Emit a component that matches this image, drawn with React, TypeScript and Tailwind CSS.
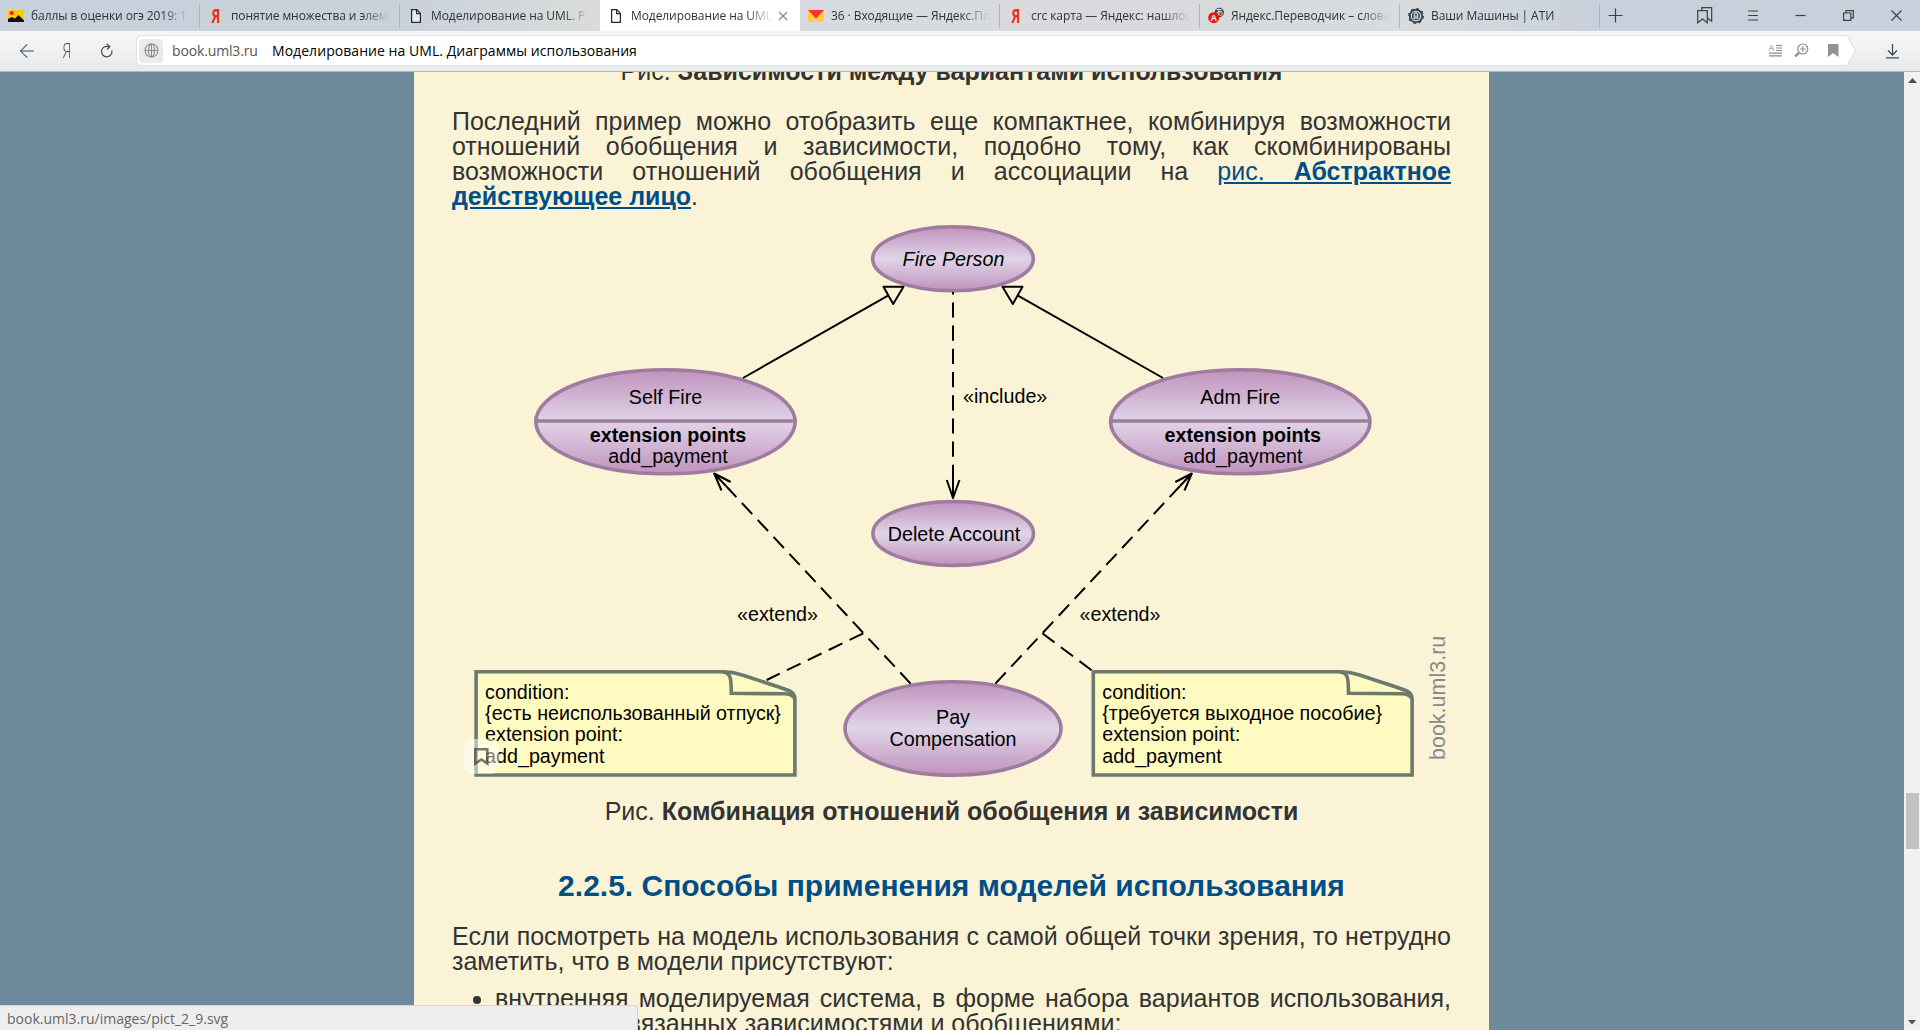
import React from 'react'
import { ArrowLeft } from 'lucide-react'

const UI_FONT = "font-['Open_Sans','Noto_Sans',sans-serif]"

const PageIcon = () => (
  <svg width="16" height="16" viewBox="0 0 16 16" fill="#fff" stroke="#2b2b2b" strokeWidth="1.3">
    <path d="M3.6 1.6h5.2l3.6 3.8v8.9H3.6z" fillOpacity=".6" />
    <path d="M8.6 1.6v4h3.8" fill="none" />
  </svg>
)

const YandexIcon = () => (
  <span className="flex h-4 w-4 items-center justify-center">
    <span className="scale-x-[0.68] text-[20px] font-bold leading-4 text-[#fb2b12] font-['Open_Sans',sans-serif]">Я</span>
  </span>
)

const PictureIcon = () => (
  <svg width="16" height="16" viewBox="0 0 16 16">
    <rect y="2" width="16" height="12" fill="#fecb00" />
    <circle cx="3.7" cy="5" r="2" fill="#f5141e" />
    <path d="M0 14v-3l4-2 3 1.500 3.500-3.500L16 12.500V14z" fill="#111" />
  </svg>
)

const MailIcon = () => (
  <svg width="16" height="16" viewBox="0 0 16 16">
    <rect y="2" width="16" height="12" fill="#ffcf40" />
    <path d="M0 2h16L8 10.500z" fill="#f8342c" />
  </svg>
)

const TranslateIcon = () => (
  <svg width="17" height="17" viewBox="0 0 17 17">
    <circle cx="11.300" cy="5.500" r="4.700" fill="#3d4146" />
    <text x="11.300" y="8.400" fontSize="8" fill="#fff" textAnchor="middle" fontFamily="Noto Sans CJK JP, sans-serif">あ</text>
    <circle cx="5.700" cy="10.700" r="5.500" fill="#f5100d" />
    <text x="5.700" y="14" fontSize="9" fontWeight="bold" fill="#fff" textAnchor="middle" fontFamily="Liberation Sans, sans-serif">A</text>
  </svg>
)

const AtiIcon = () => (
  <svg width="16" height="16" viewBox="0 0 16 16" fill="none">
    <circle cx="8" cy="8" r="7.200" fill="#36454f" />
    <circle cx="8" cy="8" r="7.300" stroke="#36454f" strokeWidth="1.400" strokeDasharray="2.900 2.830" />
    <circle cx="8" cy="8" r="4.700" stroke="#d5dade" strokeWidth="1.200" />
    <path d="M6.300 11V6.200L8 4.700l1.700 1.500V11M8 7.500V11" stroke="#e8ecee" strokeWidth="1.100" />
  </svg>
)

const tabs = [
  { icon: <PictureIcon />, title: 'баллы в оценки огэ 2019: 1', from: 'bg-[#c8d0db]' },
  { icon: <YandexIcon />, title: 'понятие множества и элементы', from: 'bg-[#c9d1da]' },
  { icon: <PageIcon />, title: 'Моделирование на UML. Р', from: 'bg-linear-to-r from-[#c9d1da] to-[#dadcda]' },
  { icon: <PageIcon />, title: 'Моделирование на UML', active: true, from: 'bg-white' },
  { icon: <MailIcon />, title: '36 · Входящие — Яндекс.Почта', from: 'bg-[#d7dade]' },
  { icon: <YandexIcon />, title: 'crc карта — Яндекс: нашлось', from: 'bg-[#d9dadd]' },
  { icon: <TranslateIcon />, title: 'Яндекс.Переводчик – словарь', from: 'bg-linear-to-r from-[#d6dadb] to-[#d8dcde]' },
  { icon: <AtiIcon />, title: 'Ваши Машины | АТИ', from: 'bg-linear-to-r from-[#d8dcde] to-[#c8d0db]' },
]

const TabBar = () => (
  <div className="flex h-[31px] shrink-0 bg-[#c8d0db] text-[12px] text-[#2f3337]">
    {tabs.map((tab, index) => (
      <div key={index} className={`flex w-[200px] shrink-0 items-center ${tab.from}`}>
        <div className="flex h-4 w-[31px] shrink-0 items-center pl-2">{tab.icon}</div>
        <div
          className={`overflow-hidden whitespace-nowrap tracking-[-0.08px] ${
            tab.active ? 'w-[141px]' : 'w-[159px]'
          } mask-[linear-gradient(to_right,#000_82%,transparent)]`}
        >
          {tab.title}
        </div>
        {tab.active ? (
          <svg className="ml-[6px]" width="10" height="10" viewBox="0 0 10 10" stroke="#888" strokeWidth="1.200">
            <path d="M1 1l8 8M9 1L1 9" />
          </svg>
        ) : (
          index !== 2 && <div className="ml-auto h-6 w-px bg-[#aeb5bd]" />
        )}
      </div>
    ))}
    <div className="flex flex-1 items-center text-[#3a4047]">
      <svg className="ml-2" width="15" height="15" viewBox="0 0 15 15" stroke="currentColor" strokeWidth="1.200">
        <path d="M7.500 0.500v14M0.500 7.500h14" />
      </svg>
      <svg className="ml-[74px]" width="16" height="17" viewBox="0 0 16 17" fill="none" stroke="currentColor" strokeWidth="1.200">
        <path d="M.7 3.700h9.600v12L5.500 12 .7 15.700z" />
        <path d="M4.700 3.500V.7h10v13.500l-4-3" />
      </svg>
      <svg className="ml-[34px]" width="12" height="11" viewBox="0 0 12 11" stroke="currentColor" strokeWidth="1.200">
        <path d="M1 1h10M1 5.500h10M1 10h10" />
      </svg>
      <svg className="ml-9" width="11" height="11" viewBox="0 0 11 11" stroke="currentColor" strokeWidth="1.200">
        <path d="M.5 5.500h10" />
      </svg>
      <svg className="ml-[37px]" width="11" height="11" viewBox="0 0 11 11" fill="none" stroke="currentColor" strokeWidth="1.200">
        <path d="M.6 3h7.200v7.400H.6zM3 3V.7h7.300v7.200H8" />
      </svg>
      <svg className="ml-[37px]" width="11" height="11" viewBox="0 0 11 11" stroke="currentColor" strokeWidth="1.200">
        <path d="M.5.5l10 10M10.500.5l-10 10" />
      </svg>
    </div>
  </div>
)

const AddressBar = () => (
  <div className="flex h-[41px] shrink-0 border-b border-[#b4bab9] bg-linear-to-b from-[#f5f6f7] to-[#e7eaeb] pt-1">
    <div className="flex h-[31px] w-[136px] shrink-0 items-center text-[#434b52]">
      <ArrowLeft className="ml-[16px]" size={22} strokeWidth={1.1} />
      <span className="ml-[23px] w-3 scale-x-75 text-[20px] font-light">Я</span>
      <svg className="ml-[27px]" width="14" height="16" viewBox="0 0 14 16" fill="none" stroke="currentColor" strokeWidth="1.200">
        <path d="M11.800 7.500A5.200 5.200 0 1 1 8.500 3.700M6.500.8l3.300 2.700-2.600 3" />
      </svg>
    </div>
    <div className="flex h-[31px] w-[1711px] items-center rounded-l-md border-y border-l border-[#e0e3e4] bg-white pl-[2px] text-[14px]">
      <div className="flex h-6 w-6 items-center justify-center rounded-sm bg-[#ebebeb]">
        <svg width="15" height="15" viewBox="0 0 15 15" fill="none" stroke="#8b8b8b" strokeWidth="1.100">
          <circle cx="7.500" cy="7.500" r="6.500" />
          <ellipse cx="7.500" cy="7.500" rx="3" ry="6.500" />
          <path d="M7.500 1v13M1 7.500h13" />
        </svg>
      </div>
      <span className="ml-[9px] w-[100px] tracking-[-0.15px] text-[#555]">book.uml3.ru</span>
      <span className="whitespace-nowrap tracking-[0.05px] text-black">Моделирование на UML. Диаграммы использования</span>
      <div className="ml-auto flex items-center pr-[8px]">
        <svg width="14" height="13" viewBox="0 0 14 13" stroke="#888" strokeWidth="1.200">
          <text x="-.5" y="6.800" fontSize="8.500" fill="#888" stroke="none" fontFamily="Liberation Sans, sans-serif">A</text>
          <path d="M7 1.500h6M7 4h6M7 6.500h6M0 9.200h13M0 11.800h13" />
        </svg>
        <svg className="ml-[11px]" width="15" height="15" viewBox="0 0 15 15" fill="none" stroke="#8f8f8f" strokeWidth="1.200">
          <circle cx="8.800" cy="6" r="5" />
          <path d="M8.800 3.200v5.600M6 6h5.600" />
          <path d="M5 9.700L1.200 13.500" strokeWidth="2.400" />
        </svg>
        <svg className="ml-[19px]" width="11" height="13" viewBox="0 0 11 13">
          <path d="M0 0h10.500v13L5.200 9 0 13z" fill="#929292" />
        </svg>
      </div>
    </div>
    <svg width="9" height="31" viewBox="0 0 9 31">
      <path d="M0 0L8.500 15.500 0 31z" fill="#fff" />
      <path d="M0 .5L8.300 15.500 0 30.500" fill="none" stroke="#d9dcdd" />
    </svg>
    <svg className="ml-[29px] mt-2" width="15" height="16" viewBox="0 0 15 16" fill="none" stroke="#434b52" strokeWidth="1.300">
      <path d="M7.500 1v11M3 7.500L7.500 12 12 7.500M1 14.800h13" />
    </svg>
  </div>
)

const UseCase = ({ cx, cy, rx, ry }: { cx: number; cy: number; rx: number; ry: number }) => (
  <ellipse cx={cx} cy={cy} rx={rx} ry={ry} fill="url(#usecase)" stroke="#a07ba0" strokeWidth="3.600" />
)

const ExtensibleUseCase = ({ cx, name }: { cx: number; name: string }) => (
  <g>
    <UseCase cx={cx} cy={421.800} rx={129.700} ry={52} />
    <path d={`M${cx - 129} 421h258`} stroke="#a07ba0" strokeWidth="3.600" />
    <text x={cx} y="403.500">{name}</text>
    <text x={cx + 2.500} y="441.500" fontWeight="bold">extension points</text>
    <text x={cx + 2.500} y="462.500">add_payment</text>
  </g>
)

const Note = ({ x, condition }: { x: number; condition: string }) => (
  <g transform={`translate(${x} 670)`}>
    <g fill="#fffabf" stroke="#6b796f" strokeWidth="3.600" strokeLinejoin="miter">
      <path d="M1.800 1.800H248C258 1.800 262 3 268 5L306 17.500C315 20.500 320.600 22 320.600 29V105H1.800z" />
      <path d="M248 1.800C256 2.500 257 7 257 23.300L310 23.800C316 24 319 25 320.600 29" fill="none" />
    </g>
    <g textAnchor="start">
      <text x="10.800" y="29">condition:</text>
      <text x="10.800" y="50">{condition}</text>
      <text x="10.800" y="71">extension point:</text>
      <text x="10.800" y="93">add_payment</text>
    </g>
  </g>
)

// Lines shared by both halves of the diagram, the right half is mirrored
const Links = () => (
  <g>
    <path d="M743 378L888 295.700" />
    <path d="M883.500 286.800h20l-10.300 17.200z" />
    <path d="M726 486L714.200 473.500M730.700 482l-16.500-8.500 7.300 17" />
    <path d="M726 486L911 684" strokeDasharray="15.200 8" />
  </g>
)

const Diagram = () => (
  <svg className="block" width="999" height="590" viewBox="452 209 999 590" fontFamily="Liberation Sans, Arial, sans-serif" fontSize="19.700" textAnchor="middle">
    <defs>
      <linearGradient id="usecase" x1="0" y1="0" x2="0" y2="1">
        <stop offset="0" stopColor="#c092bd" />
        <stop offset=".5" stopColor="#e0d4e7" />
        <stop offset="1" stopColor="#c092bd" />
      </linearGradient>
    </defs>

    <UseCase cx={953} cy={258.800} rx={80.300} ry={32} />
    <text x="953.500" y="265.500" fontStyle="italic">Fire Person</text>
    <ExtensibleUseCase cx={665.500} name="Self Fire" />
    <ExtensibleUseCase cx={1240.300} name="Adm Fire" />
    <UseCase cx={953.200} cy={533.500} rx={80.300} ry={32} />
    <text x="954" y="540.500">Delete Account</text>
    <UseCase cx={953} cy={728.500} rx={108} ry={46.800} />
    <text x="953" y="724.300">Pay</text>
    <text x="953" y="745.500">Compensation</text>

    <g fill="none" stroke="#000" strokeWidth="2" strokeLinejoin="round">
      <Links />
      <g transform="translate(1906 0) scale(-1 1)">
        <Links />
      </g>
      <path d="M953 498V480M946.800 480L953 498l6.500-18" />
      <path d="M953 480V292" strokeDasharray="15.200 8" />
      <path d="M863.300 633.300L766.700 680" strokeDasharray="15.200 8" />
      <path d="M1042.300 633.300L1092 670.500" strokeDasharray="15.200 8" />
    </g>

    <g textAnchor="start">
      <text x="963" y="403.300">«include»</text>
      <text x="737" y="620.500">«extend»</text>
      <text x="1079.500" y="620.500">«extend»</text>
    </g>

    <Note x={474.300} condition="{есть неиспользованный отпуск}" />
    <Note x={1091.500} condition="{требуется выходное пособие}" />
    <text transform="translate(1444.500 760) rotate(-90)" textAnchor="start" fontSize="21.500" fill="#888">book.uml3.ru</text>
  </svg>
)

const Article = () => (
  <main className="relative w-[1075px] bg-[#faf3d5] pl-[38px] pr-[38px] text-[25px] leading-[25px] text-[#333] font-['Liberation_Sans',Arial,sans-serif]">
    <p className="-mt-[13px] text-center">
      Рис. <b>Зависимости между вариантами использования</b>
    </p>
    <p className="mt-[25px] text-justify">
      Последний пример можно отобразить еще компактнее, комбинируя возможности отношений обобщения и зависимости,
      подобно тому, как скомбинированы возможности отношений обобщения и ассоциации на{' '}
      <a href="#" className="text-[#004e87] underline">
        рис. <b>Абстрактное действующее лицо</b>
      </a>
      .
    </p>
    <Diagram />
    {/* Bookmark button shown over the hovered picture */}
    <div className="absolute left-[50px] top-[667px] flex h-[35px] w-[35px] items-center justify-center rounded-lg bg-white/50">
      <svg width="17" height="18" viewBox="0 0 17 18" fill="none" stroke="#3f3f35" strokeOpacity=".7" strokeWidth="2.600">
        <path d="M2.300 1.300h12v14.200L8.300 11.500l-6 4z" />
      </svg>
    </div>
    <p className="text-center">
      Рис. <b>Комбинация отношений обобщения и зависимости</b>
    </p>
    <h2 className="mt-[46px] text-center text-[30px] font-bold leading-[32px] text-[#004e87]">
      2.2.5. Способы применения моделей использования
    </h2>
    <p className="mt-[22px] text-justify">
      Если посмотреть на модель использования с самой общей точки зрения, то нетрудно заметить, что в модели
      присутствуют:
    </p>
    <ul className="mt-3 list-disc pl-[43px] text-justify">
      <li>
        внутренняя моделируемая система, в форме набора вариантов использования, возможно связанных зависимостями и
        обобщениями;
      </li>
    </ul>
  </main>
)

const Scrollbar = () => (
  <div className="flex w-4 shrink-0 flex-col items-center bg-[#f1f1f1]">
    <svg className="mt-[6px]" width="9" height="5" viewBox="0 0 9 5">
      <path d="M0 5L4.500 0 9 5z" fill="#505050" />
    </svg>
    <div className="mt-[710px] h-14 w-[13px] bg-[#c1c1c1]" />
    <svg className="mb-[5px] mt-auto" width="8" height="5" viewBox="0 0 8 5">
      <path d="M0 0l4 4.500L8 0z" fill="#505050" />
    </svg>
  </div>
)

export default function App() {
  return (
    <div className={`flex h-[1030px] w-[1920px] flex-col overflow-hidden bg-[#6e899c] ${UI_FONT}`}>
      <TabBar />
      <AddressBar />
      <div className="relative flex h-[958px] overflow-hidden">
        <div className="flex flex-1 overflow-hidden pl-[414px]">
          <Article />
        </div>
        <Scrollbar />
        <div className="absolute bottom-0 left-0 flex h-[25px] w-[638px] items-center rounded-tr border-r border-t border-[#d4d4d4] bg-[#eee] pl-[7px] text-[14px] text-[#666]">
          book.uml3.ru/images/pict_2_9.svg
        </div>
      </div>
    </div>
  )
}
